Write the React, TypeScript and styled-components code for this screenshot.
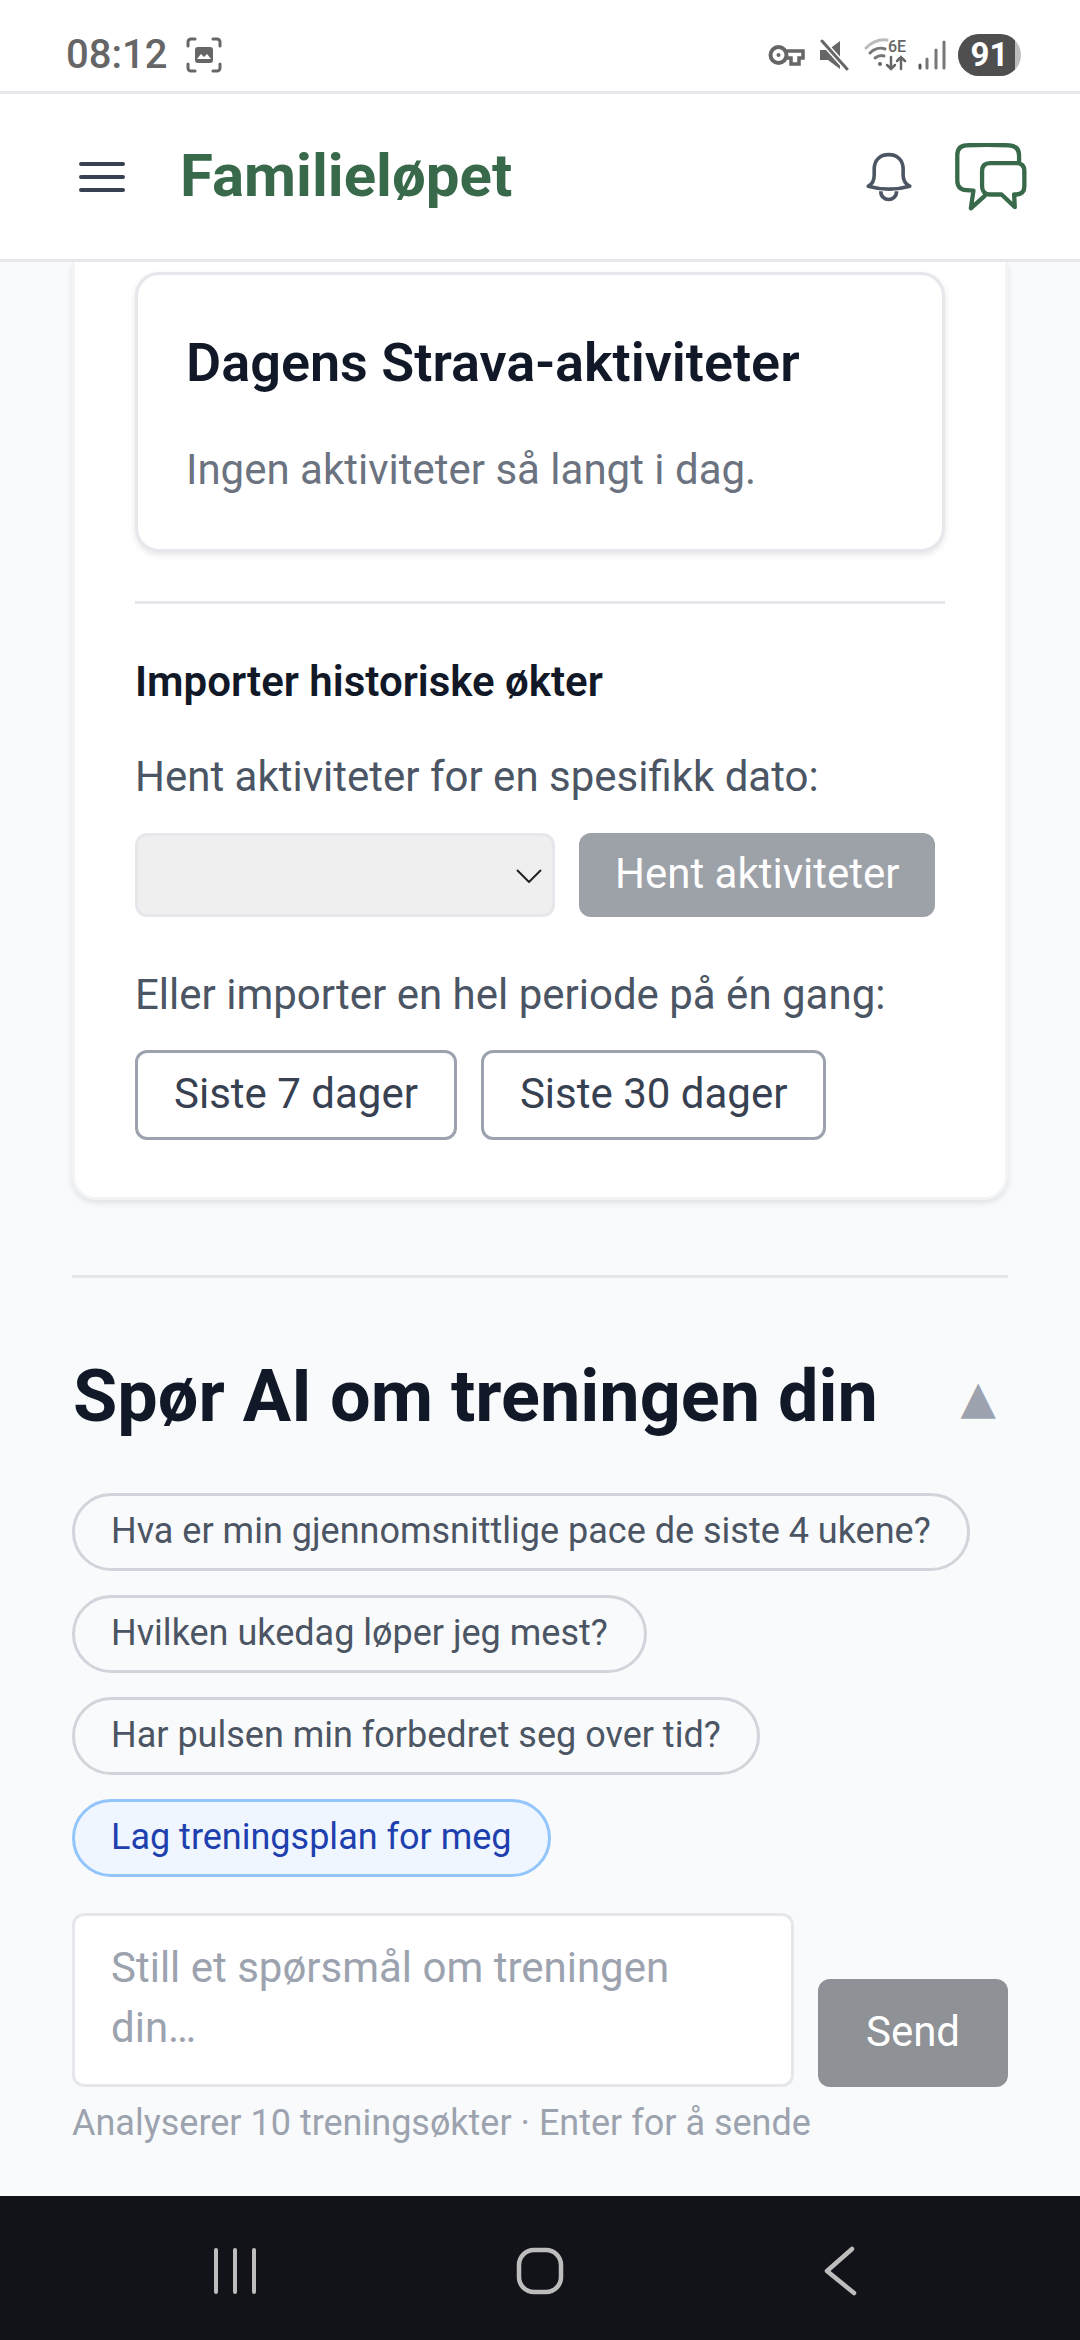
import React from "react";
import styled, { createGlobalStyle } from "styled-components";

const GlobalStyle = createGlobalStyle`
  html, body {
    margin: 0;
    padding: 0;
    background: #f9fafb;
  }
  * {
    box-sizing: border-box;
  }
`;

const Screen = styled.div`
  width: 1080px;
  height: 2340px;
  display: flex;
  flex-direction: column;
  overflow: hidden;
  background: #f9fafb;
  font-family: Roboto, "Liberation Sans", sans-serif;
`;

const StatusBar = styled.div`
  height: 94px;
  flex: none;
  display: flex;
  align-items: center;
  justify-content: space-between;
  padding: 18px 59px 0 66px;
  background: #fff;
  border-bottom: 3px solid #e5e7eb;
`;

const StatusGroup = styled.div`
  display: flex;
  align-items: center;
`;

const Clock = styled.span`
  font-size: 40px;
  font-weight: 500;
  color: #666;
  margin-right: 19px;
`;

const Battery = styled.div`
  position: relative;
  width: 63px;
  height: 42px;
  margin-left: 12px;
  border-radius: 21px;
  background: #bdbdbd;
  overflow: hidden;
  display: flex;
  align-items: center;
  justify-content: center;
`;

const BatteryFill = styled.div`
  position: absolute;
  left: 0;
  top: 0;
  bottom: 0;
  width: 57px;
  background: #4f4f4f;
`;

const BatteryLabel = styled.span`
  position: relative;
  font-size: 33px;
  font-weight: 700;
  color: #fff;
`;

const Header = styled.header`
  height: 168px;
  flex: none;
  display: flex;
  align-items: center;
  padding: 0 53px 0 79px;
  background: #fff;
  border-bottom: 3px solid #e5e7eb;
  position: relative;
  z-index: 2;
`;

const Brand = styled.div`
  margin-left: 55px;
  padding-bottom: 3px;
  flex: 1;
  font-size: 60px;
  font-weight: 700;
  color: #38694a;
`;

const Main = styled.main`
  flex: 1;
  padding: 0 72px;
  min-height: 0;
`;

const OuterCard = styled.section`
  background: #fff;
  padding: 10px 60px 57px;
  border: 3px solid #f3f4f6;
  border-top: none;
  border-radius: 0 0 24px 24px;
  box-shadow: 0 3px 6px rgba(0, 0, 0, 0.1);
`;

const InnerCard = styled.div`
  background: #fff;
  padding: 47px 48px 48px;
  border: 3px solid #e5e7eb;
  border-radius: 24px;
  box-shadow: 0 3px 6px rgba(0, 0, 0, 0.1);
`;

const CardTitle = styled.h2`
  margin: 0;
  font-size: 54px;
  line-height: 81px;
  font-weight: 600;
  color: #111827;
`;

const Muted = styled.p`
  margin: 35px 0 0;
  font-size: 42px;
  line-height: 63px;
  color: #6b7280;
`;

const Rule = styled.hr<{ $top: number; $bottom: number }>`
  border: none;
  height: 3px;
  background: #e5e7eb;
  margin: ${(p) => `${p.$top}px 0 ${p.$bottom}px`};
`;

const SubTitle = styled.h3`
  margin: 0;
  font-size: 42px;
  line-height: 63px;
  font-weight: 600;
  color: #111827;
`;

const Hint = styled.p<{ $top: number }>`
  margin: ${(p) => p.$top}px 0 0;
  font-size: 42px;
  line-height: 63px;
  color: #4b5563;
`;

const DateRow = styled.div`
  display: flex;
  gap: 24px;
  margin-top: 25px;
`;

const SelectWrap = styled.div`
  position: relative;
  width: 420px;
`;

const DateSelect = styled.select`
  display: block;
  width: 100%;
  height: 84px;
  appearance: none;
  border: 3px solid #e5e7eb;
  border-radius: 12px;
  &:disabled {
    opacity: 1;
    background: #efefef;
  }
`;

const Chevron = styled.svg`
  position: absolute;
  right: 13px;
  top: 36px;
`;

const FetchButton = styled.button`
  height: 84px;
  border: none;
  border-radius: 12px;
  background: #9da1a8;
  color: #fff;
  font-family: inherit;
  font-size: 42px;
  padding: 0 36px 3px;
`;

const PeriodRow = styled.div`
  display: flex;
  gap: 24px;
  margin-top: 24px;
`;

const PeriodButton = styled.button`
  height: 90px;
  padding: 0 36px 3px;
  background: #fff;
  border: 3px solid #9ca3af;
  border-radius: 12px;
  color: #374151;
  font-family: inherit;
  font-size: 42px;
`;

const AskSection = styled.section`
  margin-top: 75px;
`;

const AskHeader = styled.div`
  display: flex;
  align-items: center;
  justify-content: space-between;
  padding: 0 12px 0 1px;
`;

const AskTitle = styled.h2`
  margin: 0;
  font-size: 72px;
  line-height: 90px;
  font-weight: 700;
  color: #111827;
`;

const Caret = styled.span`
  font-size: 46px;
  color: #9ca3af;
  font-family: "DejaVu Sans", sans-serif;
`;

const Chips = styled.div`
  display: flex;
  flex-direction: column;
  align-items: flex-start;
  gap: 24px;
  margin-top: 51px;
`;

const Chip = styled.button<{ $active?: boolean }>`
  height: 78px;
  padding: 0 36px 2px;
  border-radius: 39px;
  font-family: inherit;
  font-size: 36px;
  border: 3px solid ${(p) => (p.$active ? "#93c5fd" : "#d1d5db")};
  background: ${(p) => (p.$active ? "#eff6ff" : "transparent")};
  color: ${(p) => (p.$active ? "#1e40af" : "#4b5563")};
`;

const ComposeRow = styled.div`
  display: flex;
  align-items: flex-end;
  gap: 24px;
  margin-top: 36px;
`;

const Question = styled.textarea`
  flex: 1;
  height: 174px;
  padding: 22px 36px;
  resize: none;
  border: 3px solid #e5e7eb;
  border-radius: 12px;
  background: #fff;
  font-family: inherit;
  font-size: 42px;
  line-height: 60px;
  &::placeholder {
    color: #9ca3af;
    opacity: 1;
  }
`;

const SendButton = styled.button`
  width: 190px;
  height: 108px;
  border: none;
  border-radius: 12px;
  background: #8e9196;
  color: #fff;
  font-family: inherit;
  font-size: 42px;
  padding: 0 0 3px;
`;

const Footnote = styled.p`
  margin: 12px 0 0;
  font-size: 36px;
  line-height: 48px;
  color: #9ca3af;
`;

const NavBar = styled.nav`
  height: 144px;
  flex: none;
  display: flex;
  align-items: center;
  justify-content: space-between;
  padding: 6px 215px 0 213px;
  background: #111318;
`;

export default function App() {
  return (
    <>
      <GlobalStyle />
      <Screen>
        <StatusBar>
          <StatusGroup>
            <Clock>08:12</Clock>
            <svg width="36" height="36" viewBox="0 0 36 36" fill="none" stroke="#666" strokeWidth="3" strokeLinecap="round">
              <path d="M2 9V5a3 3 0 0 1 3-3h4M27 2h4a3 3 0 0 1 3 3v4M34 27v4a3 3 0 0 1-3 3h-4M9 34H5a3 3 0 0 1-3-3v-4" />
              <rect x="9" y="10" width="18" height="16" rx="3" fill="#666" stroke="none" />
              <path d="M11 22l4-5 3 3 3-3 4 5z" fill="#fff" stroke="none" />
            </svg>
          </StatusGroup>
          <StatusGroup>
            <svg width="37" height="22" viewBox="0 0 37 22" fill="none" stroke="#666" strokeWidth="4">
              <circle cx="10.5" cy="11" r="8" />
              <path d="M18 7h17v7h-4v6h-8v-6h-5" strokeWidth="3.5" />
              <circle cx="10.5" cy="11" r="2" fill="#666" stroke="none" />
            </svg>
            <svg width="30" height="32" viewBox="0 0 30 32" style={{ marginLeft: 14 }}>
              <path d="M1 11h8L21 2v28L9 21H1z" fill="#666" />
              <path d="M3 2l25 28" stroke="#fff" strokeWidth="6" />
              <path d="M3 2l25 28" stroke="#666" strokeWidth="3" strokeLinecap="round" />
            </svg>
            <svg width="44" height="34" viewBox="0 0 44 34" fill="none" strokeLinecap="round" style={{ marginLeft: 15 }}>
              <path d="M2 10C8 4 16 1 23 2" stroke="#bbb" strokeWidth="3" />
              <path d="M6 15c4-4 10-6 15-4M11 20c3-2 6-3 9-2" stroke="#777" strokeWidth="3" />
              <circle cx="16" cy="26" r="2" fill="#666" />
              <text x="24" y="14" fontFamily="Roboto, sans-serif" fontSize="16" fontWeight="500" fill="#666">6E</text>
              <path d="M27 19v12M23 27l4 4 4-4M37 31V19M33 23l4-4 4 4" stroke="#666" strokeWidth="2.5" />
            </svg>
            <svg width="28" height="30" viewBox="0 0 28 30" fill="none" stroke="#777" strokeWidth="3" strokeLinecap="round" style={{ marginLeft: 10 }}>
              <path d="M2 28v-3" stroke="#555" />
              <path d="M9 28v-9M18 28V10M26 28V2" />
            </svg>
            <Battery>
              <BatteryFill />
              <BatteryLabel>91</BatteryLabel>
            </Battery>
          </StatusGroup>
        </StatusBar>
        <Header>
          <svg width="46" height="32" viewBox="0 0 46 32" stroke="#374151" strokeWidth="4" strokeLinecap="round">
            <path d="M2 3h42M2 16h42M2 29h42" />
          </svg>
          <Brand>Familieløpet</Brand>
          <svg width="46" height="50" viewBox="495 450 140 150" fill="none" stroke="#4b5563" strokeWidth="11" strokeLinejoin="round" style={{ marginRight: 41 }}>
            <path d="M502 553c12-6 18-18 18-34v-18c0-28 18-44 44-44s44 16 44 44v18c0 16 8 28 20 34-42 12-84 12-126 0z" />
            <path d="M540 568c0 34 48 34 48 0" />
          </svg>
          <svg width="74" height="68" viewBox="758 423 224 204" fill="none" stroke="#38694a" strokeWidth="13" strokeLinejoin="round" strokeLinecap="round">
            <path d="M958 478v-18c0-20-10-30-30-31-50-2-90-2-130 0-18 1-27 12-27 30v76c0 18 9 29 27 30l22 1-8 54 42-38" />
            <path d="M870 483h80c16 0 24 9 24 24v46c0 15-8 24-24 25h-7l2 38-40-38h-35c-16 0-24-10-24-25v-46c0-15 8-24 24-24z" />
          </svg>
        </Header>
        <Main>
          <OuterCard>
            <InnerCard>
              <CardTitle>Dagens Strava-aktiviteter</CardTitle>
              <Muted>Ingen aktiviteter så langt i dag.</Muted>
            </InnerCard>
            <Rule $top={49} $bottom={46} />
            <SubTitle>Importer historiske økter</SubTitle>
            <Hint $top={32}>Hent aktiviteter for en spesifikk dato:</Hint>
            <DateRow>
              <SelectWrap>
                <DateSelect disabled />
                <Chevron width="26" height="14" viewBox="0 0 26 14" fill="none" stroke="#222" strokeWidth="2">
                  <path d="M1 1l12 12L25 1" />
                </Chevron>
              </SelectWrap>
              <FetchButton>Hent aktiviteter</FetchButton>
            </DateRow>
            <Hint $top={46}>Eller importer en hel periode på én gang:</Hint>
            <PeriodRow>
              <PeriodButton>Siste 7 dager</PeriodButton>
              <PeriodButton>Siste 30 dager</PeriodButton>
            </PeriodRow>
          </OuterCard>
          <AskSection>
            <Rule $top={0} $bottom={74} />
            <AskHeader>
              <AskTitle>Spør AI om treningen din</AskTitle>
              <Caret>▲</Caret>
            </AskHeader>
            <Chips>
              <Chip>Hva er min gjennomsnittlige pace de siste 4 ukene?</Chip>
              <Chip>Hvilken ukedag løper jeg mest?</Chip>
              <Chip>Har pulsen min forbedret seg over tid?</Chip>
              <Chip $active>Lag treningsplan for meg</Chip>
            </Chips>
            <ComposeRow>
              <Question placeholder="Still et spørsmål om treningen din…" />
              <SendButton>Send</SendButton>
            </ComposeRow>
            <Footnote>Analyserer 10 treningsøkter · Enter for å sende</Footnote>
          </AskSection>
        </Main>
        <NavBar>
          <svg width="44" height="46" viewBox="0 0 44 46" stroke="#bdbdbd" strokeWidth="4" strokeLinecap="round">
            <path d="M3 2v42M22 2v42M41 2v42" />
          </svg>
          <svg width="48" height="48" viewBox="0 0 48 48" fill="none" stroke="#bdbdbd" strokeWidth="4.5">
            <rect x="3" y="3" width="42" height="42" rx="15" />
          </svg>
          <svg width="42" height="50" viewBox="0 0 42 50" fill="none" stroke="#bdbdbd" strokeWidth="4.5" strokeLinecap="round" strokeLinejoin="round">
            <path d="M29 3L4 25l27 22" />
          </svg>
        </NavBar>
      </Screen>
    </>
  );
}
